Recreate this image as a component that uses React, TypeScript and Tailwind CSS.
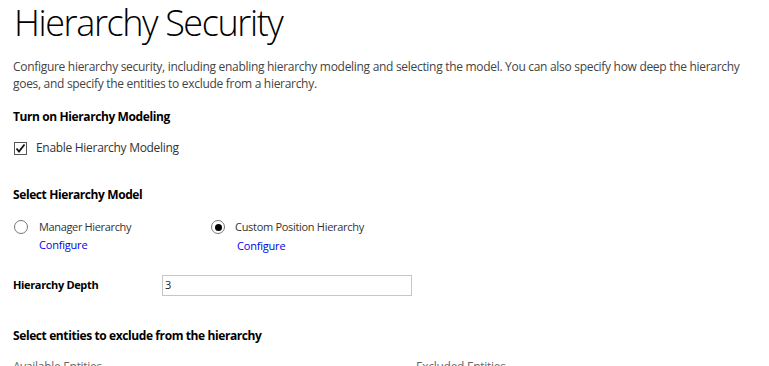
import React from "react";

export default function App() {
  return (
    <div className="w-[769px] h-[366px] overflow-hidden bg-white text-[#222] pl-[13px]" style={{ fontFamily: '"Open Sans", "Noto Sans", sans-serif' }}>
      <h1 className="text-[36px] font-light leading-[44px] pt-[1px] pl-[1px] text-black tracking-[-1.4px]">Hierarchy Security</h1>
      <p className="mt-[13px] text-[12px] leading-[17px] text-[#444] tracking-[-0.3px] whitespace-nowrap">
        Configure hierarchy security, including enabling hierarchy modeling and selecting the model. You can also specify how deep the hierarchy
        <br />
        goes, and specify the entities to exclude from a hierarchy.
      </p>
      <div className="mt-[17px] text-[12px] font-bold leading-[16px] text-black tracking-[-0.4px]">Turn on Hierarchy Modeling</div>
      <label className="mt-[15px] flex items-center gap-[9px] text-[12px] leading-[16px] text-[#333] tracking-[-0.3px]">
        <span className="w-[13px] h-[13px] border border-[#555] bg-white flex items-center justify-center ml-[1px]">
          <svg width="11" height="11" viewBox="0 0 11 11"><path d="M1.5 5.5 L4 8.5 L9.5 1.5" stroke="#111" strokeWidth="1.8" fill="none" /></svg>
        </span>
        Enable Hierarchy Modeling
      </label>
      <div className="mt-[31px] text-[12px] font-bold leading-[16px] text-black tracking-[-0.4px]">Select Hierarchy Model</div>
      <div className="mt-[16px] flex text-[11px] leading-[16px]">
        <div className="w-[198px] flex">
          <span className="w-[14px] h-[14px] rounded-full border border-[#777] mt-[1px] ml-[1px]" />
          <div className="ml-[11px]">
            <div className="text-[#333] tracking-[-0.35px]">Manager Hierarchy</div>
            <div className="mt-[2px] text-[#0000ee] tracking-[-0.2px]">Configure</div>
          </div>
        </div>
        <div className="flex">
          <span className="w-[14px] h-[14px] rounded-full border border-[#777] mt-[1px] flex items-center justify-center">
            <span className="w-[7px] h-[7px] rounded-full bg-black" />
          </span>
          <div className="ml-[10px]">
            <div className="text-[#333] tracking-[-0.3px]">Custom Position Hierarchy</div>
            <div className="mt-[3px] ml-[2px] text-[#0000ee] tracking-[-0.2px]">Configure</div>
          </div>
        </div>
      </div>
      <div className="mt-[21px] flex items-center text-[11px]">
        <div className="w-[149px] font-bold text-black tracking-[-0.35px]">Hierarchy Depth</div>
        <div className="w-[250px] h-[21px] border border-[#c6c6c6] flex items-center pl-[2px] text-[#222]">3</div>
      </div>
      <div className="mt-[32px] text-[12px] font-bold leading-[16px] text-black tracking-[-0.4px]">Select entities to exclude from the hierarchy</div>
      <div className="mt-[15px] flex text-[12px] text-[#666] leading-[16px] tracking-[-0.3px]">
        <div className="w-[403px]">Available Entities</div>
        <div>Excluded Entities</div>
      </div>
    </div>
  );
}
